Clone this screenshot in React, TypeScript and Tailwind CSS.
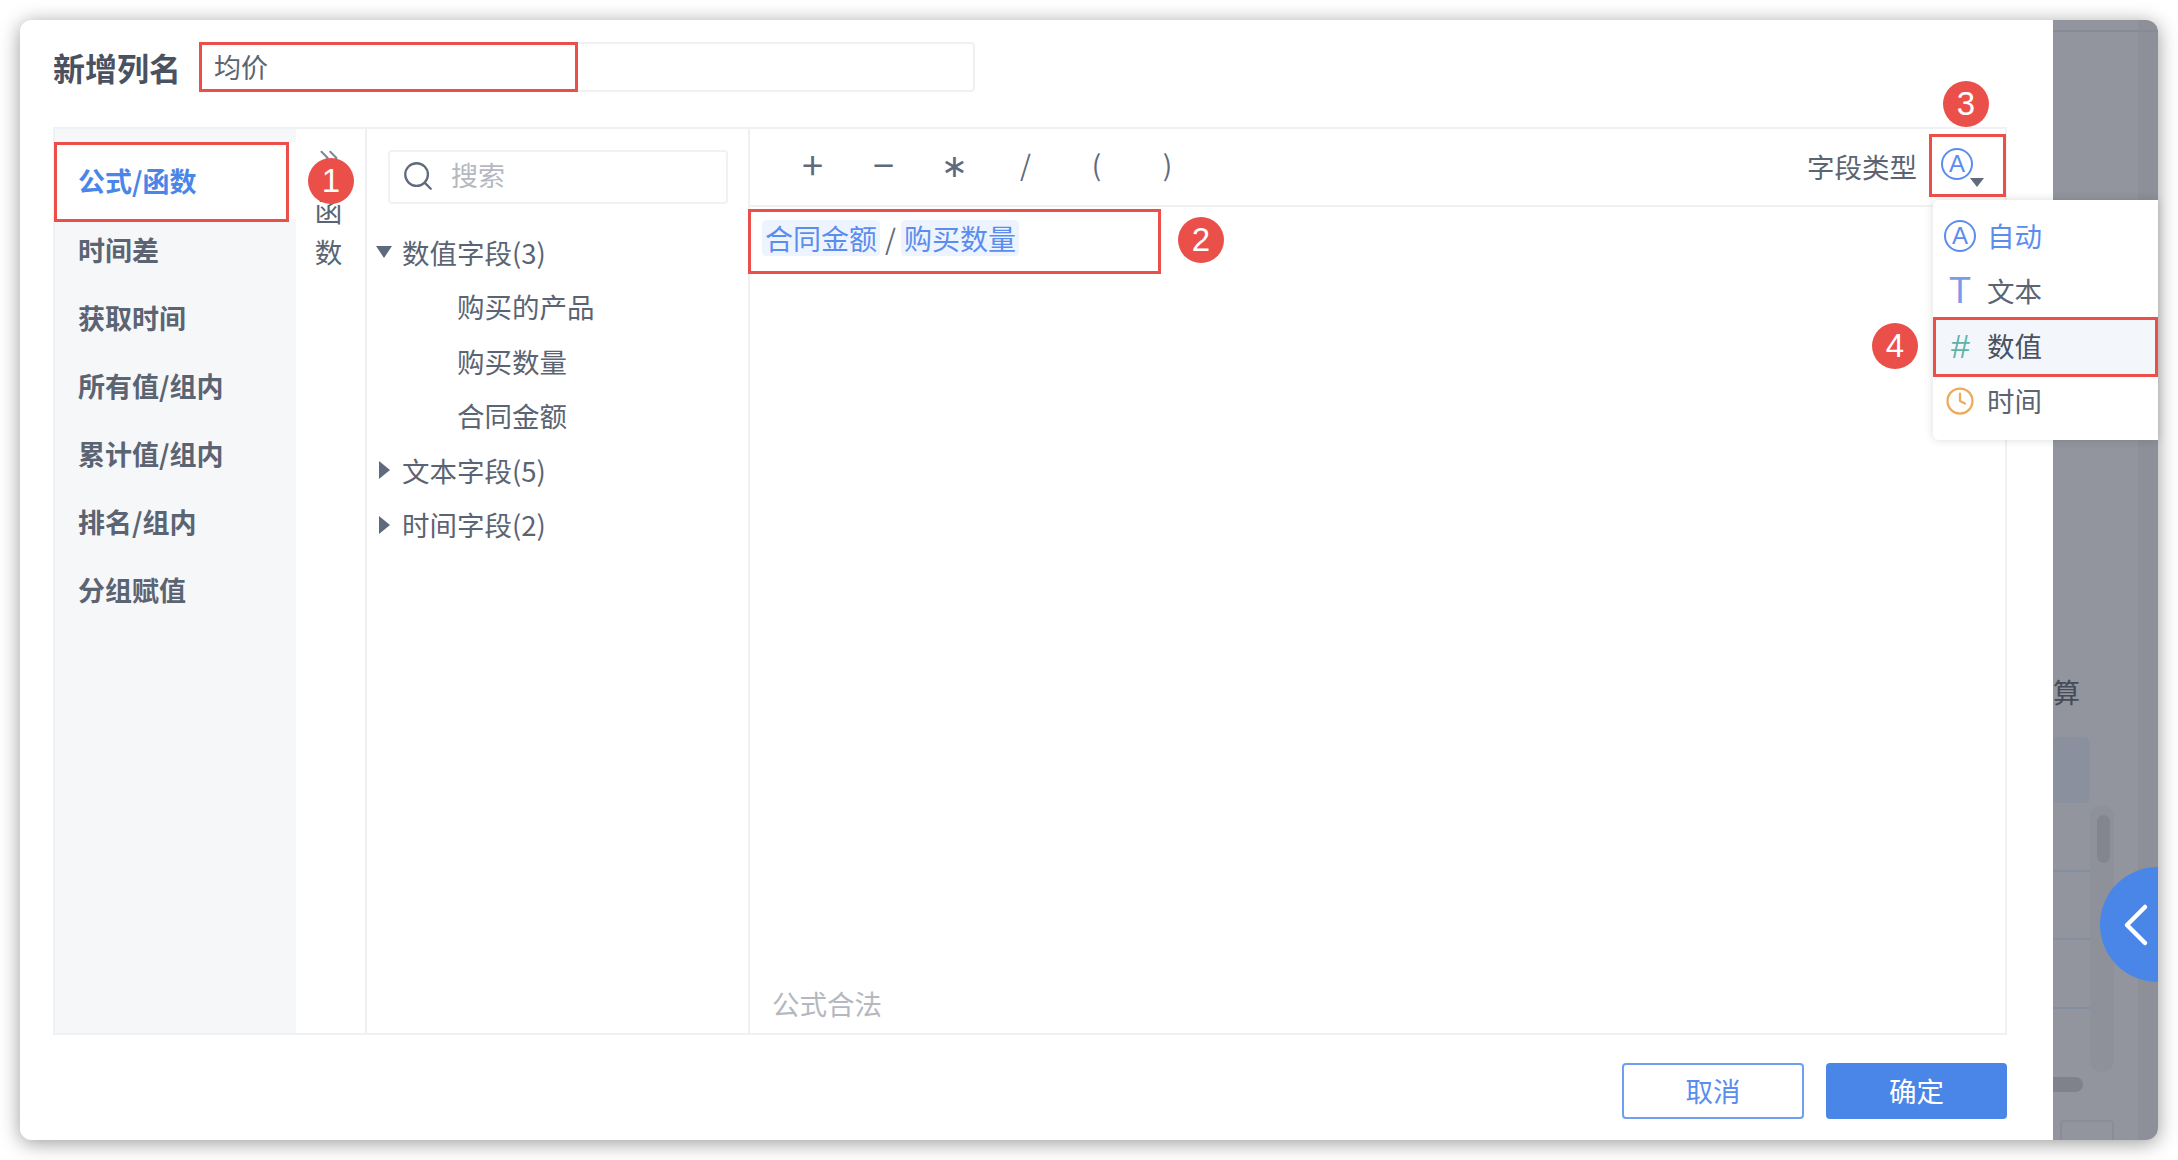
import { ChevronLeft, ChevronsRight, Clock, Search } from "lucide-react";

const cjk = { fontFamily: '"Noto Sans CJK SC", "Noto Sans", sans-serif' };

const sideItems = ["时间差", "获取时间", "所有值/组内", "累计值/组内", "排名/组内", "分组赋值"];

const operators = [
  { label: "+", size: "text-[38px]" },
  { label: "−", size: "text-[38px]" },
  { label: "∗", size: "text-[32px] pb-[3px] font-light" },
  { label: "/", size: "text-[28px]" },
  { label: "(", size: "text-[28px]" },
  { label: ")", size: "text-[28px]" },
];

function Badge({ n, className }: { n: number; className: string }) {
  return (
    <div className={`absolute w-[46px] h-[46px] rounded-full bg-[#ea4f4a] text-white text-[33px] font-['Liberation_Sans',sans-serif] flex items-center justify-center ${className}`}>
      {n}
    </div>
  );
}

function RedBox({ className }: { className: string }) {
  return <div className={`absolute border-[3px] border-[#ea4f4a] pointer-events-none ${className}`} />;
}

function CircleA({ size }: { size: string }) {
  return (
    <div className={`rounded-full border-2 border-[#5b8def] text-[#5b8def] flex items-center justify-center ${size}`}>
      <span className="text-[24px] leading-none font-['Liberation_Sans',sans-serif]">A</span>
    </div>
  );
}

function Caret({ open }: { open?: boolean }) {
  return open ? (
    <div className="w-0 h-0 border-x-[8px] border-x-transparent border-t-[12px] border-t-[#5f6b7d]" />
  ) : (
    <div className="w-0 h-0 ml-[2px] border-y-[9px] border-y-transparent border-l-[11px] border-l-[#5f6b7d]" />
  );
}

function TreeGroup({ label, open }: { label: string; open?: boolean }) {
  return (
    <div className="h-[54.5px] flex items-center">
      <div className="w-[30px] flex justify-center pl-[3px]">
        <Caret open={open} />
      </div>
      <span className="ml-[5px]">{label}</span>
    </div>
  );
}

function TreeLeaf({ label }: { label: string }) {
  return <div className="h-[54.5px] flex items-center pl-[90px]">{label}</div>;
}

function TypeMenu() {
  return (
    <div className="absolute left-[1913px] top-[180px] w-[225px] h-[240px] bg-white rounded-l-md shadow-[0_0_10px_rgba(0,0,0,0.14)] pt-[9px] text-[27.5px] text-[#5b6472]">
      <div className="h-[55px] flex items-center pl-[11px] pb-[1px] text-[#5b8def]">
        <CircleA size="w-[32px] h-[32px]" />
        <span className="ml-[11px]">自动</span>
      </div>
      <div className="h-[55px] flex items-center pl-[11px] pb-[1px]">
        <span className="w-[32px] text-center text-[36px] leading-none font-['Liberation_Sans',sans-serif] text-[#7d9ae8]">T</span>
        <span className="ml-[11px]">文本</span>
      </div>
      <div className="h-[55px] flex items-center pl-[11px] pb-[2px] bg-[#f3f7fc] text-[#4a5160]">
        <span className="w-[32px] text-center text-[34px] leading-none italic font-['Liberation_Sans',sans-serif] text-[#5fb3a5]">#</span>
        <span className="ml-[11px]">数值</span>
      </div>
      <div className="h-[55px] flex items-center pl-[11px] pb-[2px]">
        <div className="w-[32px] flex justify-center">
          <Clock size={30} strokeWidth={1.8} color="#f0a85a" />
        </div>
        <span className="ml-[11px]">时间</span>
      </div>
    </div>
  );
}

function BackdropStrip() {
  return (
    <div className="flex-1 bg-[linear-gradient(90deg,#92959d_0%,#92959d_81%,#8d9099_81%)] rounded-r-xl overflow-hidden flex flex-col">
      <div className="h-[12px] border-b-2 border-[#888b94] shrink-0" />
      <div className="h-[642px] shrink-0" />
      <div className="h-[36px] shrink-0 text-[27px] leading-[36px] text-[#454b57]">算</div>
      <div className="h-[335px] mt-[27px] shrink-0 flex items-start">
        <div className="w-[37px]">
          <div className="h-[66px] bg-[#8a909e] rounded-r-md" />
          <div className="h-[69px] border-b-2 border-[#858da0]" />
          <div className="h-[68px] border-b-2 border-[#858da0]" />
          <div className="h-[69px] border-b-2 border-[#858da0]" />
        </div>
        <div className="w-[24px] h-[267px] mt-[68px] rounded-full bg-[#8e9199] pt-[10px] pl-[7px]">
          <div className="w-[13px] h-[48px] rounded-full bg-[#83868e]" />
        </div>
      </div>
      <div className="h-[15px] mt-[5px] w-[30px] rounded-r-full bg-[#7f828a] shrink-0" />
      <div className="w-[54px] h-[40px] mt-[28px] ml-[7px] border-2 border-[#8a8d96] rounded-sm shrink-0" />
    </div>
  );
}

export default function App() {
  return (
    <div className="w-[2178px] h-[1160px] bg-white p-[20px] overflow-hidden" style={cjk}>
      <div className="relative w-[2138px] h-[1120px] rounded-xl flex shadow-[0_3px_20px_rgba(0,0,0,0.4)]">
        {/* dialog */}
        <div className="w-[2033px] h-full bg-white rounded-l-xl pt-[22px] pl-[33px] flex flex-col text-[27.5px] text-[#5b6472]">
          <div className="h-[50px] flex items-center shrink-0">
            <span className="text-[32px] font-bold text-[#4a5160] w-[146px]">新增列名</span>
            <div className="w-[776px] h-[50px] border-2 border-[#eff0f2] rounded-sm flex items-center pl-[13px] text-[27px] text-[#5b6472]">
              均价
            </div>
          </div>

          <div className="mt-[35px] w-[1954px] h-[908px] border-2 border-[#f0f1f3] flex shrink-0">
            {/* categories */}
            <div className="w-[241px] bg-[#f6f7f9] pt-[13px] font-bold text-[27px]">
              <div className="h-[77px] bg-white pl-[23px] pt-[1px] flex items-center text-[#4a86e8]">公式/函数</div>
              <div className="-mt-[3px]">
                {sideItems.map((item) => (
                  <div key={item} className="h-[68px] pl-[23px] flex items-center text-[#5b6472]">
                    {item}
                  </div>
                ))}
              </div>
            </div>

            {/* collapsed function column */}
            <div className="w-[71px] border-r-2 border-[#eef0f3] flex flex-col items-center pt-[14px] pr-[4px]">
              <ChevronsRight size={30} strokeWidth={1.6} color="#7c8594" />
              <div className="mt-[17px] leading-[41px]">函</div>
              <div className="leading-[41px]">数</div>
            </div>

            {/* fields */}
            <div className="w-[383px] border-r-2 border-[#eef0f3] pt-[21px]">
              <div className="ml-[21px] w-[340px] h-[54px] border-2 border-[#f0f1f4] rounded flex items-center pl-[11px] pb-[3px] text-[#b5b8c0]">
                <Search size={34} strokeWidth={1.6} color="#5f6b7d" />
                <span className="ml-[16px] text-[27px]">搜索</span>
              </div>
              <div className="mt-[21px]">
                <TreeGroup label="数值字段(3)" open />
                <TreeLeaf label="购买的产品" />
                <TreeLeaf label="购买数量" />
                <TreeLeaf label="合同金额" />
                <TreeGroup label="文本字段(5)" />
                <TreeGroup label="时间字段(2)" />
              </div>
            </div>

            {/* editor */}
            <div className="flex-1 flex flex-col">
              <div className="h-[78px] border-b-2 border-[#f0f1f3] flex items-center pl-[27px] pr-[88px] pb-[6px] shrink-0">
                {operators.map((op) => (
                  <span key={op.label} className={`w-[71px] text-center leading-none text-[#5f6b7d] ${op.size}`}>
                    {op.label}
                  </span>
                ))}
                <span className="ml-auto pt-[5px]">字段类型</span>
              </div>
              <div className="pt-[13px] pl-[12px] flex items-center text-[28px] text-[#5b8def] leading-[36px]">
                <span className="bg-[#eef4fe] rounded px-[3px]">合同金额</span>
                <span className="mx-[5px] text-[#5f6b7d]">/</span>
                <span className="bg-[#eef4fe] rounded px-[3px]">购买数量</span>
              </div>
              <div className="mt-auto pl-[22px] pb-[9px] text-[#b5b8c0]">公式合法</div>
            </div>
          </div>

          <div className="mt-[28px] w-[1954px] flex justify-end gap-[22px]">
            <button className="w-[182px] h-[56px] border-2 border-[#6f9ff0] rounded text-[#5b8def] bg-white">取消</button>
            <button className="w-[181px] h-[56px] rounded bg-[#4a86e8] text-white">确定</button>
          </div>
        </div>

        <BackdropStrip />

        {/* blue side handle */}
        <div className="absolute left-[2080px] top-[847px] w-[58px] h-[115px] rounded-l-full bg-[#4a86e8] flex items-center justify-center pl-[14px]">
          <ChevronLeft size={72} strokeWidth={1.5} color="white" className="shrink-0" />
        </div>

        {/* field type trigger */}
        <div className="absolute left-[1921px] top-[128px] flex">
          <CircleA size="w-[32px] h-[32px]" />
        </div>
        <div className="absolute left-[1950px] top-[158px] w-0 h-0 border-x-[7px] border-x-transparent border-t-[9px] border-t-[#5f6b7d]" />

        <TypeMenu />

        {/* annotations */}
        <RedBox className="left-[179px] top-[22px] w-[379px] h-[50px]" />
        <RedBox className="left-[34px] top-[122px] w-[235px] h-[80px]" />
        <RedBox className="left-[728px] top-[189px] w-[413px] h-[65px]" />
        <RedBox className="left-[1909px] top-[114px] w-[77px] h-[63px]" />
        <RedBox className="left-[1913px] top-[297px] w-[225px] h-[60px]" />
        <Badge n={1} className="left-[288px] top-[138px]" />
        <Badge n={2} className="left-[1158px] top-[197px]" />
        <Badge n={3} className="left-[1923px] top-[61px]" />
        <Badge n={4} className="left-[1852px] top-[303px]" />
      </div>
    </div>
  );
}
